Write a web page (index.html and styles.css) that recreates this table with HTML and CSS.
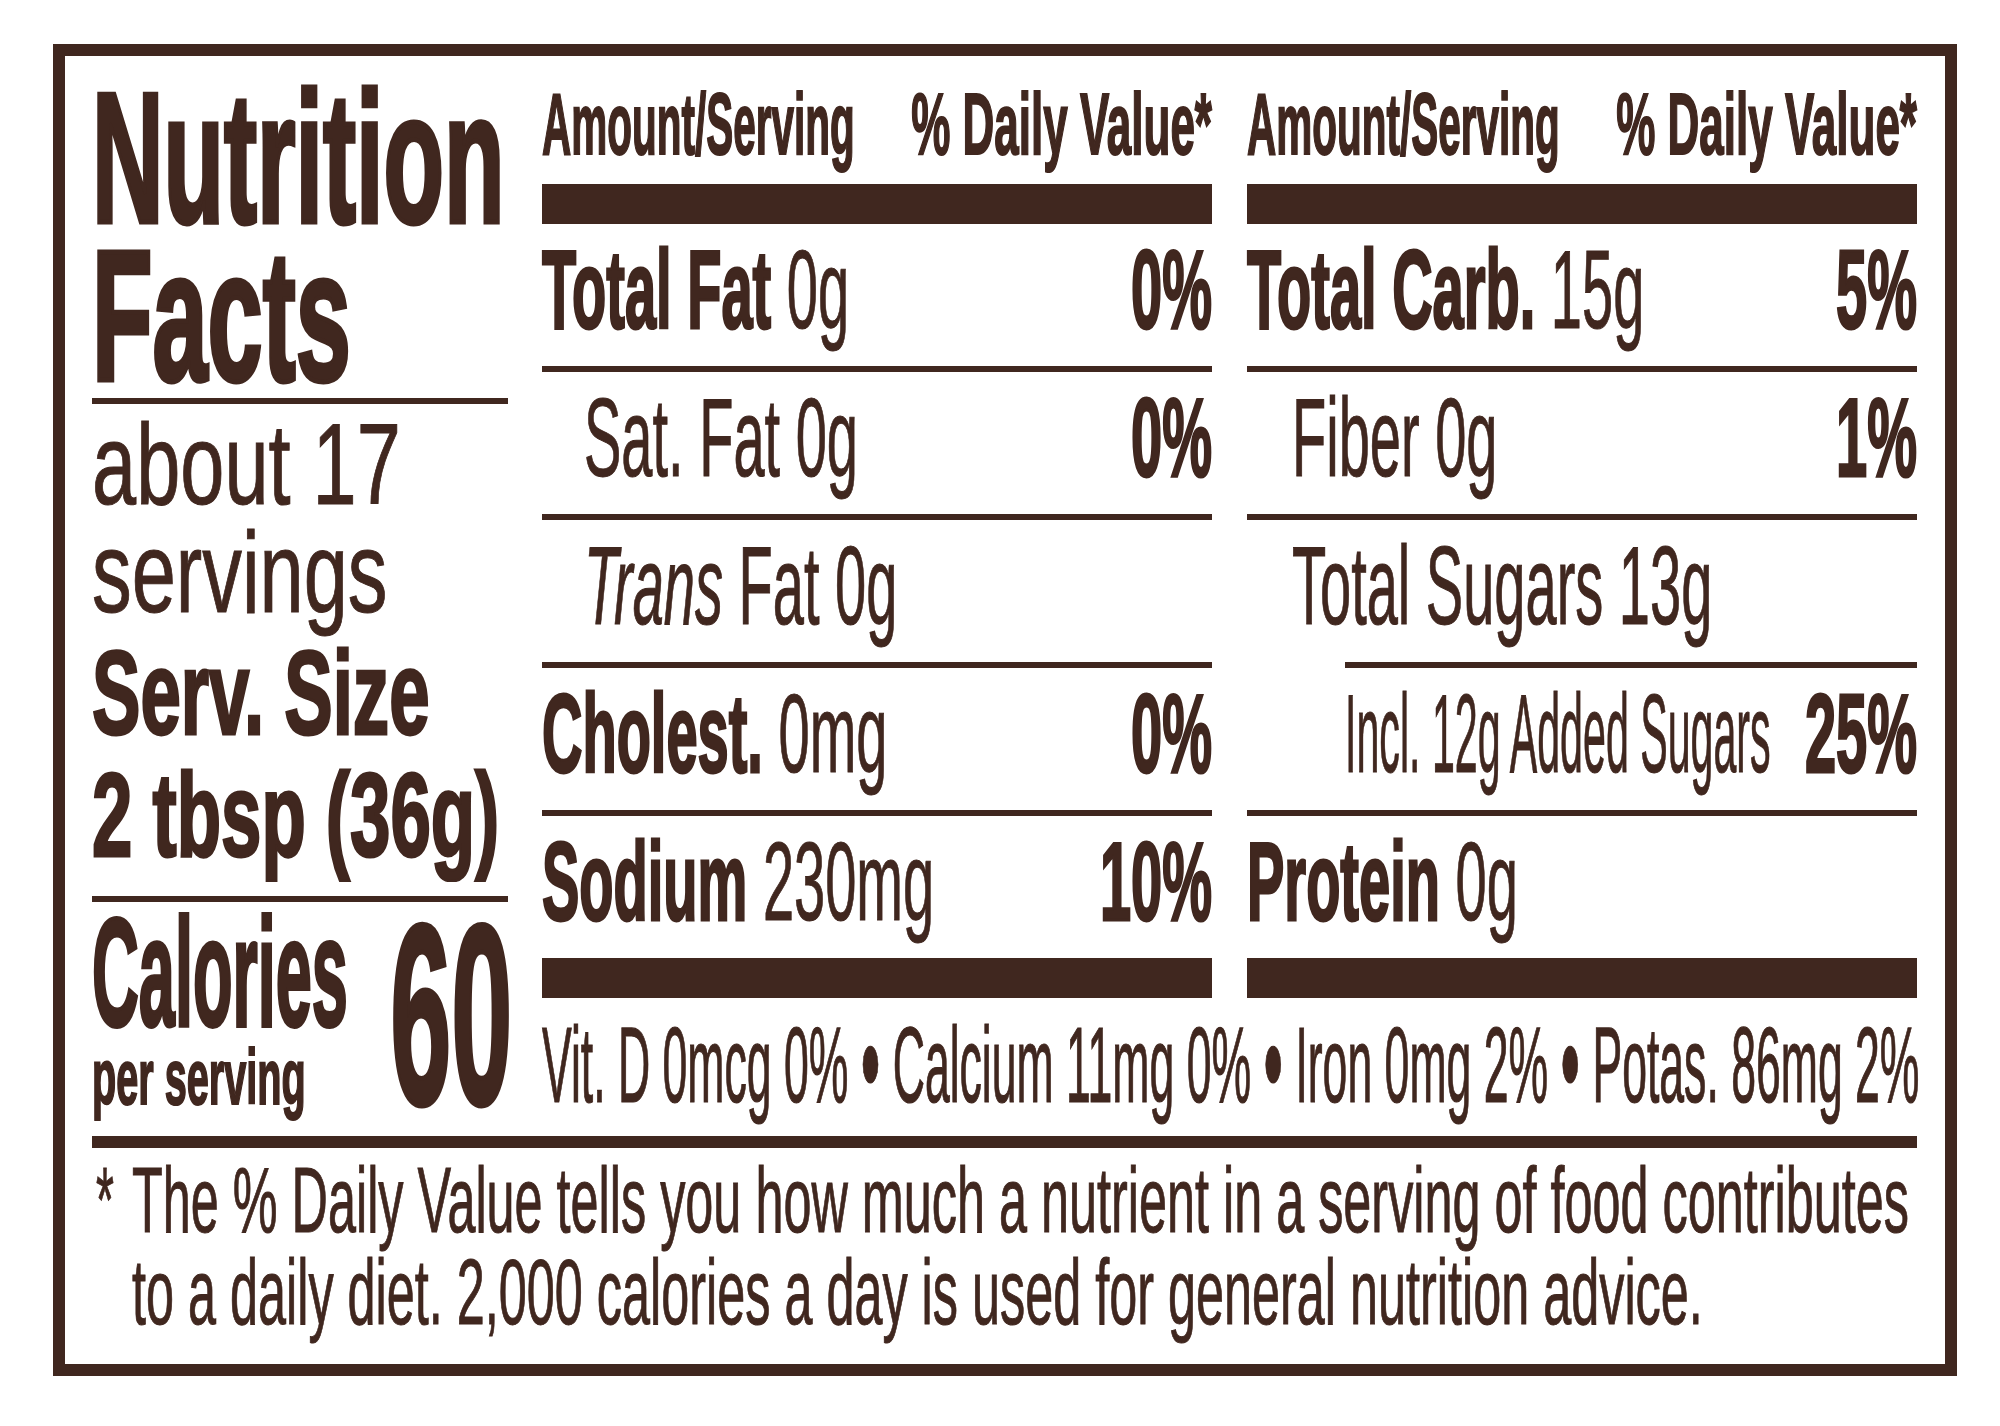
FILE: index.html
```html
<!DOCTYPE html>
<html lang="en">
<head>
<meta charset="utf-8">
<title>Nutrition Facts</title>
<link rel="stylesheet" href="styles.css">
</head>
<body>
<div class="label">
  <div class="top">
    <div class="left">
      <div class="title">Nutrition</div>
      <div class="title">Facts</div>
      <div class="thin"></div>
      <div class="servings">
        <div class="sv">about 17</div>
        <div class="sv">servings</div>
      </div>
      <div class="size">
        <div class="sz">Serv. Size</div>
        <div class="sz">2 tbsp (36g)</div>
      </div>
      <div class="thin thin-cal"></div>
      <div class="cal">
        <div class="cal-l">
          <div class="cal-word">Calories</div>
          <div class="per">per serving</div>
        </div>
        <div class="sixty">60</div>
      </div>
    </div>
    <div class="right">
      <div class="cols">
        <div class="col">
          <div class="head"><span class="amt">Amount/Serving</span><span class="dv">% Daily Value*</span></div>
          <div class="bar"></div>
          <div class="row"><span><span class="bd">Total Fat</span> 0g</span><span class="bd">0%</span></div>
          <div class="line"></div>
          <div class="row sub"><span>Sat. Fat 0g</span><span class="bd">0%</span></div>
          <div class="line"></div>
          <div class="row sub"><span><span class="it">Trans</span> Fat 0g</span></div>
          <div class="line"></div>
          <div class="row"><span><span class="bd">Cholest.</span> 0mg</span><span class="bd">0%</span></div>
          <div class="line"></div>
          <div class="row"><span><span class="bd">Sodium</span> 230mg</span><span class="bd">10%</span></div>
          <div class="bar"></div>
        </div>
        <div class="col">
          <div class="head"><span class="amt">Amount/Serving</span><span class="dv">% Daily Value*</span></div>
          <div class="bar"></div>
          <div class="row"><span><span class="bd">Total Carb.</span> 15g</span><span class="bd">5%</span></div>
          <div class="line"></div>
          <div class="row sub2"><span>Fiber 0g</span><span class="bd">1%</span></div>
          <div class="line"></div>
          <div class="row sub2"><span>Total Sugars 13g</span></div>
          <div class="line line-indent"></div>
          <div class="row incl"><span class="incl-text">Incl. 12g Added Sugars</span><span class="bd">25%</span></div>
          <div class="line"></div>
          <div class="row"><span><span class="bd">Protein</span> 0g</span></div>
          <div class="bar"></div>
        </div>
      </div>
      <div class="vit">Vit. D 0mcg 0% <span class="dot">&bull;</span> Calcium 11mg 0% <span class="dot">&bull;</span> Iron 0mg 2% <span class="dot">&bull;</span> Potas. 86mg 2%</div>
    </div>
  </div>
  <div class="rule"></div>
  <div class="foot">
    <span class="ast">*</span>
    <div class="foot-text">The % Daily Value tells you how much a nutrient in a serving of food contributes<br>to a daily diet. 2,000 calories a day is used for general nutrition advice.</div>
  </div>
</div>
</body>
</html>
```

FILE: styles.css
```css
:root {
  --ink: #40271f;
}

html, body {
  margin: 0;
  padding: 0;
  background: #ffffff;
}

body {
  min-height: 100vh;
  font-family: "Liberation Sans", Arial, sans-serif;
  color: var(--ink);
}

/* The label is laid out at half height with normal widths,
   then stretched vertically by two: this gives the condensed type. */
.label {
  box-sizing: border-box;
  width: 1904px;
  margin: 44px 0 0 53px;
  border-style: solid;
  border-color: var(--ink);
  border-width: 6px 12px;
  padding: 0 28px 13px 27px;
  transform: scaleY(2);
  transform-origin: 0 0;
  -webkit-text-stroke: 0.5px var(--ink);
}

.top {
  display: flex;
}

/* ---------- left column ---------- */
.left {
  flex: none;
  width: 416px;
  margin-right: 34px;
  padding-top: 11.5px;
}

.title {
  font-weight: 700;
  font-size: 93px;
  line-height: 79.5px;
  white-space: nowrap;
  -webkit-text-stroke: 2.5px var(--ink);
  transform: scaleX(1.065);
  transform-origin: 0 50%;
}

.thin {
  height: 3px;
  background: var(--ink);
}

.servings {
  margin-top: 3.5px;
}

.sv {
  font-size: 57.5px;
  line-height: 54px;
  white-space: nowrap;
  transform: scaleX(1.38);
  transform-origin: 0 50%;
}

.size {
  margin-top: 4px;
}

.sz {
  font-weight: 700;
  font-size: 59px;
  line-height: 60.5px;
  white-space: nowrap;
  -webkit-text-stroke: 1.5px var(--ink);
  transform: scaleX(1.23);
  transform-origin: 0 50%;
}

.thin-cal {
  margin-top: 10px;
}

.cal {
  display: flex;
  align-items: flex-start;
  margin-top: 7.5px;
}

.cal-l {
  flex: 1 1 0;
  min-width: 0;
}

.cal-word {
  font-weight: 700;
  font-size: 77px;
  line-height: 55px;
  white-space: nowrap;
  -webkit-text-stroke: 2px var(--ink);
  transform: scaleX(0.842);
  transform-origin: 0 50%;
}

.per {
  margin-top: 6.5px;
  font-weight: 700;
  font-size: 38.5px;
  line-height: 38.5px;
  white-space: nowrap;
  -webkit-text-stroke: 1px var(--ink);
  transform: scaleX(1.03);
  transform-origin: 0 50%;
}

.sixty {
  flex: none;
  margin-right: -4px;
  font-weight: 700;
  font-size: 128px;
  line-height: 97.5px;
  -webkit-text-stroke: 2.5px var(--ink);
  transform: scaleX(0.857);
  transform-origin: 100% 50%;
}

/* ---------- nutrient columns ---------- */
.right {
  flex: none;
  width: 1375px;
}

.cols {
  display: flex;
  gap: 35px;
}

.col {
  flex: none;
  width: 670px;
}

.head {
  box-sizing: border-box;
  height: 64px;
  padding-top: 12px;
  display: flex;
  justify-content: space-between;
  font-weight: 700;
  font-size: 44px;
  line-height: 44px;
  white-space: nowrap;
  -webkit-text-stroke: 1px var(--ink);
}

.amt {
  display: inline-block;
  transform: scaleX(0.92);
  transform-origin: 0 50%;
}

.bar {
  height: 20px;
  background: var(--ink);
}

.line {
  height: 3px;
  background: var(--ink);
}

.line-indent {
  margin-left: 98px;
}

.row {
  box-sizing: border-box;
  height: 71px;
  padding-bottom: 5px;
  display: flex;
  justify-content: space-between;
  font-size: 56px;
  line-height: 66px;
  white-space: nowrap;
}

.sub {
  padding-left: 42px;
}

.sub2 {
  padding-left: 45px;
}

.incl {
  padding-left: 98px;
}

.incl-text {
  flex: 1 1 0;
  min-width: 0;
  transform: scaleX(0.735);
  transform-origin: 0 50%;
}

.bd {
  font-weight: 700;
  -webkit-text-stroke: 1.5px var(--ink);
}

.it {
  font-style: italic;
}

/* smaller type stretched taller, so the line keeps within the column */
.vit {
  margin-top: 6.5px;
  margin-bottom: 9.42px;
  font-size: 44.58px;
  line-height: 44.58px;
  white-space: nowrap;
  transform: scaleY(1.2113);
  transform-origin: 0 0;
}

.dot {
  font-size: 1.25em;
  line-height: 0;
  vertical-align: -0.06em;
}

/* ---------- footnote ---------- */
.rule {
  height: 6px;
  margin-top: 9px;
  background: var(--ink);
}

.foot {
  display: flex;
  margin-top: 3px;
  font-size: 46px;
  line-height: 46px;
}

.ast {
  flex: none;
  box-sizing: border-box;
  width: 40px;
  padding-left: 4px;
}

.foot-text {
  flex: none;
  white-space: nowrap;
  transform: scaleX(1.095);
  transform-origin: 0 50%;
}
```
